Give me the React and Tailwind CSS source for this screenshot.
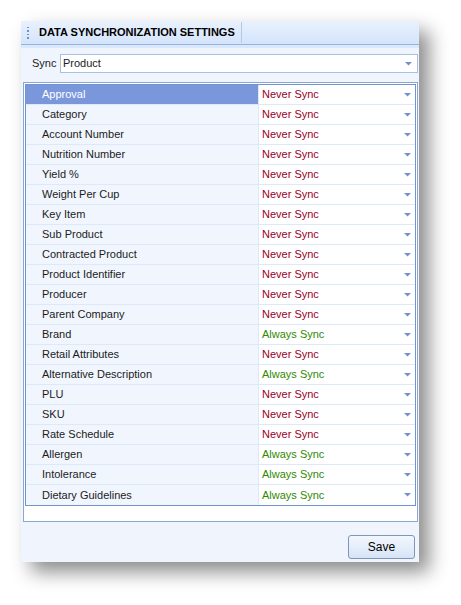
import React from "react";

const rows = [
  ["Approval", "Never Sync"],
  ["Category", "Never Sync"],
  ["Account Number", "Never Sync"],
  ["Nutrition Number", "Never Sync"],
  ["Yield %", "Never Sync"],
  ["Weight Per Cup", "Never Sync"],
  ["Key Item", "Never Sync"],
  ["Sub Product", "Never Sync"],
  ["Contracted Product", "Never Sync"],
  ["Product Identifier", "Never Sync"],
  ["Producer", "Never Sync"],
  ["Parent Company", "Never Sync"],
  ["Brand", "Always Sync"],
  ["Retail Attributes", "Never Sync"],
  ["Alternative Description", "Always Sync"],
  ["PLU", "Never Sync"],
  ["SKU", "Never Sync"],
  ["Rate Schedule", "Never Sync"],
  ["Allergen", "Always Sync"],
  ["Intolerance", "Always Sync"],
  ["Dietary Guidelines", "Always Sync"],
];

function Arrow() {
  return (
    <svg width="7" height="4" viewBox="0 0 7 4" className="block">
      <rect x="0.5" y="0" width="6" height="1" fill="#7492c9" />
      <polygon points="1,1 6,1 3.5,3.5" fill="#7492c9" />
    </svg>
  );
}

export default function App() {
  return (
    <div
      className="min-h-screen bg-white pt-[21px] pl-[21px]"
      style={{ fontFamily: '"Liberation Sans", Arial, sans-serif' }}
    >
      <div className="w-[398px] h-[541px] bg-[#f0f5fd] shadow-[10px_10px_18px_rgba(0,0,0,0.45)] flex flex-col text-[11px] text-[#1b1b1b]">
        {/* title bar */}
        <div className="h-[24px] flex items-stretch bg-gradient-to-b from-[#e9f1fd] to-[#d4e4fb] border-b border-[#90b4e6] shrink-0">
          <div className="w-[6px]" />
          <div className="flex flex-col justify-center gap-[2px] w-[2px]">
            <div className="w-[2px] h-[1.5px] bg-[#6c93d0]" />
            <div className="w-[2px] h-[1.5px] bg-[#6c93d0]" />
            <div className="w-[2px] h-[1.5px] bg-[#6c93d0]" />
            <div className="w-[2px] h-[1.5px] bg-[#6c93d0]" />
          </div>
          <div className="pl-[10px] w-[212px] flex items-center font-bold text-[11px] text-black">
            DATA SYNCHRONIZATION SETTINGS
          </div>
          <div className="w-px bg-[#b2c8e6] my-[1px]" />
          <div className="flex-1" />
        </div>
        <div className="h-[3px] bg-[#dbe8fb] shrink-0" />

        {/* sync row */}
        <div className="flex items-center mt-[6px] pl-[11px] pr-[1px] shrink-0">
          <span className="w-[28px]">Sync</span>
          <div className="flex-1 h-[19px] bg-white border border-[#a9c0e0] flex items-center pl-[2px] pr-[5px]">
            <span className="flex-1">Product</span>
            <Arrow />
          </div>
        </div>

        {/* grid */}
        <div className="mt-[9px] ml-[2px] mr-[1px] h-[440px] bg-white border border-[#8aa7d3] p-px shrink-0">
          <div className="border border-[#6f94d0] flex flex-col">
            {rows.map(([name, val], i) => {
              const sel = i === 0;
              const always = val === "Always Sync";
              return (
                <div
                  key={name}
                  className={
                    "h-[20px] flex " +
                    (i < rows.length - 1 ? "border-b border-[#dde8f8]" : "")
                  }
                >
                  <div
                    className={
                      "w-[233px] flex items-center pl-[16px] border-r border-[#dde8f8] " +
                      (sel ? "bg-[#7b97dc] text-white" : "bg-[#f1f6fe]")
                    }
                  >
                    {name}
                  </div>
                  <div className="flex-1 bg-white flex items-center pl-[3px] pr-[4px]">
                    <span
                      className={
                        "flex-1 " + (always ? "text-[#2f8a00]" : "text-[#9a0026]")
                      }
                    >
                      {val}
                    </span>
                    <Arrow />
                  </div>
                </div>
              );
            })}
          </div>
        </div>

        {/* footer */}
        <div className="flex-1 flex items-start justify-end pt-[13px] pr-[4px]">
          <button className="w-[67px] h-[24px] rounded-[3px] border border-[#7d97b9] bg-gradient-to-b from-[#f3f7fd] via-[#e5eefb] to-[#d7e3f5] text-[12px] text-black">
            Save
          </button>
        </div>
      </div>
    </div>
  );
}
